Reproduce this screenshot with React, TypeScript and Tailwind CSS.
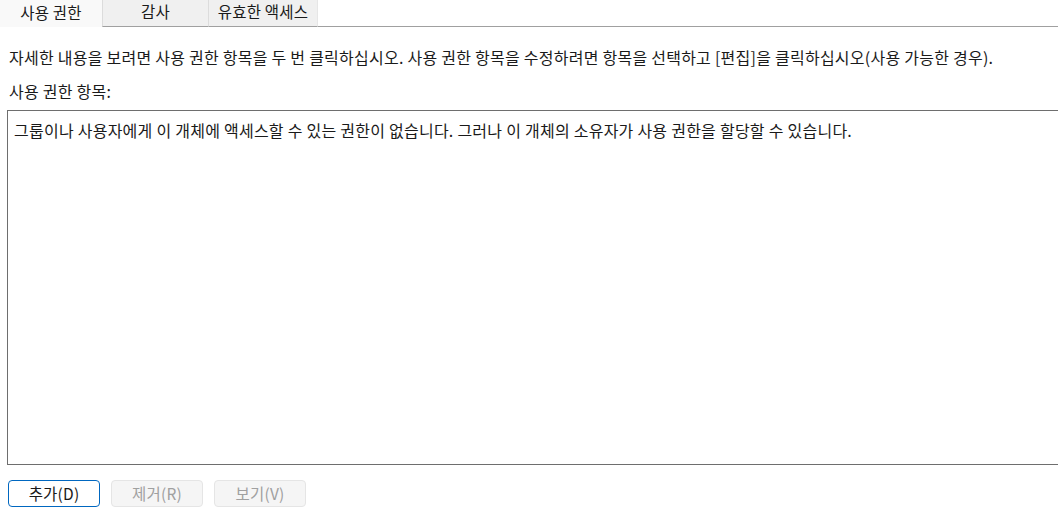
import React from "react";

const font = {
  fontFamily: '"Noto Sans CJK KR", "Noto Sans", sans-serif',
};

const tabs = [
  { label: "사용 권한", active: true },
  { label: "감사", active: false },
  { label: "유효한 액세스", active: false },
];

const buttons = [
  { label: "추가(D)", enabled: true },
  { label: "제거(R)", enabled: false },
  { label: "보기(V)", enabled: false },
];

export default function App() {
  return (
    <div
      className="w-[1058px] h-[512px] bg-white overflow-hidden flex flex-col text-[#1a1a1a]"
      style={font}
    >
      {/* tab strip */}
      <div className="flex h-[27px] shrink-0">
        {tabs.map((tab) =>
          tab.active ? (
            <div
              key={tab.label}
              className="w-[102px] h-full bg-[#f9f9f9] flex items-center justify-center text-[15.5px] tracking-[0.2px] pb-[2px]"
            >
              {tab.label}
            </div>
          ) : (
            <div
              key={tab.label}
              className="h-full bg-[#f0f0f0] border-l border-[#dcdcdc] border-b border-b-[#a0a0a0] flex items-center justify-center text-[15.5px] tracking-[0.2px] pb-[2px]"
              style={{ width: tab.label === "감사" ? 106 : 109 }}
            >
              {tab.label}
            </div>
          )
        )}
        <div className="flex-1 h-full border-l border-[#e6e6e6] border-b border-b-[#a0a0a0]" />
      </div>

      <div className="pl-[9px] pt-[19px] text-[16px] tracking-[0.25px] leading-[22px] whitespace-nowrap">
        자세한 내용을 보려면 사용 권한 항목을 두 번 클릭하십시오. 사용 권한
        항목을 수정하려면 항목을 선택하고 [편집]을 클릭하십시오(사용 가능한
        경우).
      </div>
      <div className="pl-[9px] pt-[12px] text-[16px] tracking-[0.25px] leading-[22px]">
        사용 권한 항목:
      </div>

      <div className="ml-[7px] mt-[8px] w-[1100px] h-[355px] border border-[#6e6e6e] shrink-0">
        <div className="pl-[6px] pt-[8px] text-[16px] tracking-[0.25px] leading-[22px] whitespace-nowrap">
          그룹이나 사용자에게 이 개체에 액세스할 수 있는 권한이 없습니다.
          그러나 이 개체의 소유자가 사용 권한을 할당할 수 있습니다.
        </div>
      </div>

      <div className="flex gap-[11px] pl-[8px] pt-[15px]">
        {buttons.map((b) => (
          <div
            key={b.label}
            className={
              b.enabled
                ? "w-[92px] h-[27px] rounded-[4px] border border-[#0067c0] bg-white flex items-center justify-center text-[15.5px] tracking-[0.2px] text-[#1a1a1a]"
                : "w-[92px] h-[27px] rounded-[4px] border border-[#e5e5e5] bg-[#f5f5f5] flex items-center justify-center text-[15.5px] tracking-[0.2px] text-[#a0a0a0]"
            }
          >
            {b.label}
          </div>
        ))}
      </div>
    </div>
  );
}
